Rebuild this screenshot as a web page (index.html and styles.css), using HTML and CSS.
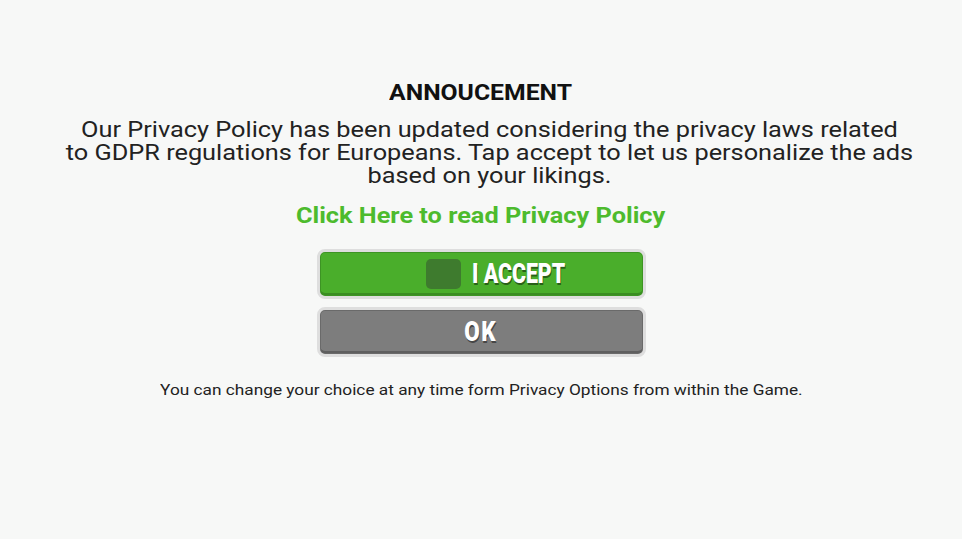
FILE: index.html
```html
<!DOCTYPE html>
<html lang="en">
<head>
<meta charset="utf-8">
<title>Announcement</title>
<link rel="stylesheet" href="styles.css">
</head>
<body>
<main class="screen">
  <h1 class="title"><span class="wide">ANNOUCEMENT</span></h1>
  <p class="message"><span class="wide">Our Privacy Policy has been updated considering the privacy laws related<br>to GDPR regulations for Europeans. Tap accept to let us personalize the ads<br>based on your likings.</span></p>
  <a class="policy-link" href="#"><span class="wide">Click Here to read Privacy Policy</span></a>
  <div class="actions">
    <button class="btn btn-accept" type="button"><span class="checkbox"></span><span class="btn-label">I ACCEPT</span></button>
    <button class="btn btn-ok" type="button"><span class="btn-label">OK</span></button>
  </div>
  <p class="note"><span class="wide">You can change your choice at any time form Privacy Options from within the Game.</span></p>
</main>
</body>
</html>
```
FILE: styles.css
```css
html, body {
  margin: 0;
  padding: 0;
  background: #f7f8f7;
}
.screen {
  width: 962px;
  height: 539px;
  box-sizing: border-box;
  padding-top: 80px;
  display: flex;
  flex-direction: column;
  align-items: center;
  font-family: Roboto, "Liberation Sans", sans-serif;
  color: #1e1e1e;
}
.wide {
  display: inline-block;
  transform: scaleX(1.15);
}
.title {
  margin: 0;
  font-size: 21.5px;
  line-height: 26px;
  font-weight: 700;
  color: #111;
}
.message {
  margin: 12px 0 0;
  padding-left: 17px;
  font-size: 22px;
  line-height: 23px;
  text-align: center;
  color: #222;
}
.policy-link {
  margin-top: 16px;
  font-size: 22px;
  line-height: 26px;
  font-weight: 700;
  color: #4dbb2d;
  text-decoration: none;
}
.actions {
  margin-top: 20px;
  display: flex;
  flex-direction: column;
  gap: 8px;
}
.btn {
  width: 329px;
  height: 50px;
  box-sizing: border-box;
  border: 3px solid #dedede;
  border-radius: 8px;
  padding: 0;
  display: flex;
  align-items: center;
  justify-content: center;
  font-family: Roboto, "Liberation Sans", sans-serif;
  cursor: pointer;
}
.btn-accept {
  justify-content: flex-start;
  padding-left: 106px;
  gap: 11px;
  background: #4aae2b;
  box-shadow: inset 0 0 0 1px #3d9424, inset 0 -3px 0 #3a8d22;
}
.btn-ok {
  background: #7d7d7d;
  box-shadow: inset 0 0 0 1px #6a6a6a, inset 0 -3px 0 #5f5f5f;
}
.checkbox {
  flex: none;
  width: 35px;
  height: 30px;
  border-radius: 5px;
  background: #3e7b2e;
}
.btn-label {
  display: inline-block;
  font-size: 28px;
  line-height: 30px;
  font-weight: 900;
  color: #fff;
  transform: scaleX(0.76);
  text-shadow: 1px 2px 0 rgba(0, 0, 0, 0.45);
}
.btn-accept .btn-label {
  transform-origin: left center;
}
.btn-ok .btn-label {
  letter-spacing: 2px;
  transform: scaleX(0.8);
}
.note {
  margin: 24px 0 0;
  font-size: 15px;
  line-height: 18px;
  color: #222;
}
```
